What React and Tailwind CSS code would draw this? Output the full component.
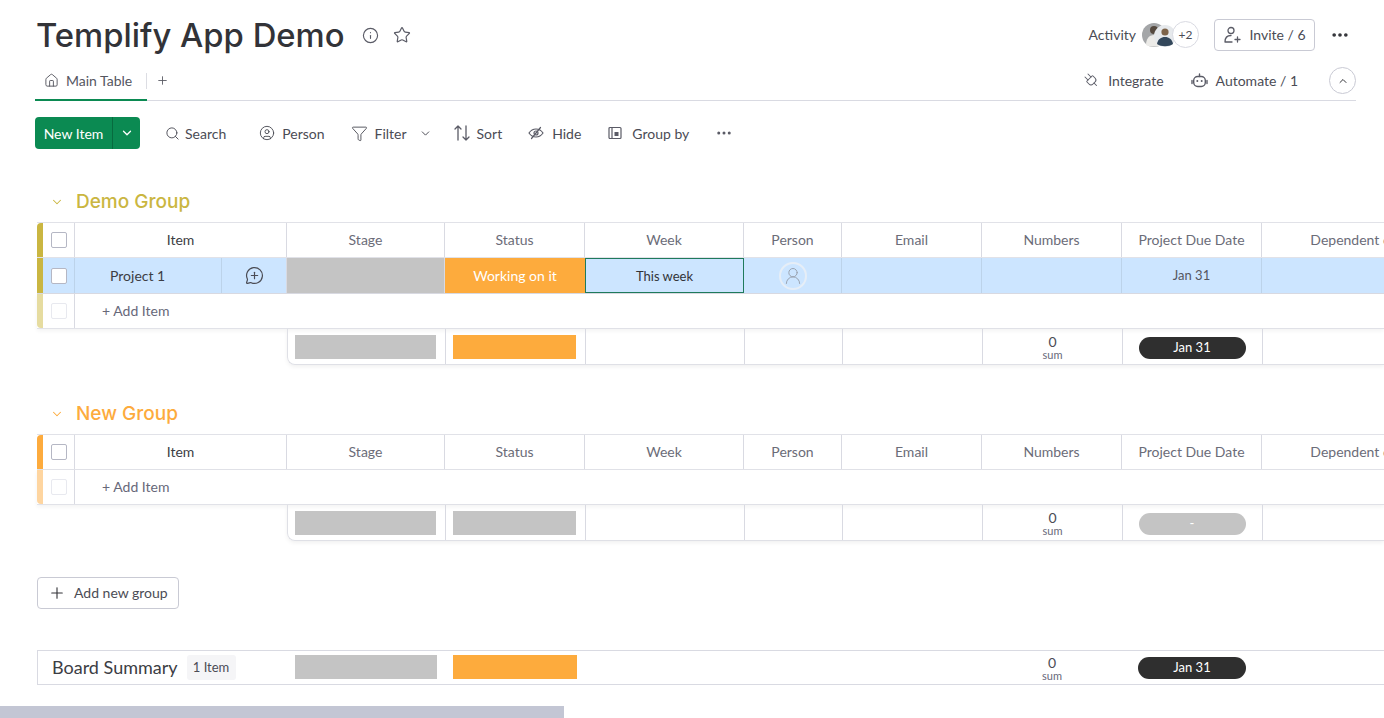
import React from "react";
import { House, Info, Star, Search, CircleUser, Funnel, ChevronDown, ChevronUp, Plus, Plug, MessageCirclePlus, Ellipsis, UserRound } from "lucide-react";

const GRID = "grid grid-cols-[32px_212px_158px_140px_159px_98px_140px_140px_140px_186px] w-[1425px] shrink-0";
const SUMMARY_GRID = "grid grid-cols-[158px_140px_159px_98px_140px_140px_140px_186px] w-[1161px] shrink-0";
const COLS = ["Stage", "Status", "Week", "Person", "Email", "Numbers", "Project Due Date", "Dependent on"];

function Tool({ icon, label, gap = "gap-[7px]" }) {
  return (
    <div className={`flex items-center ${gap} text-[14px] text-[#4b4c55] whitespace-nowrap`}>
      {icon}
      <span>{label}</span>
    </div>
  );
}

function Check({ faint }) {
  return (
    <div className={`w-4 h-4 rounded-[2px] border bg-white ${faint ? "border-[#e8e9ef]" : "border-[#b5b7c4]"}`} />
  );
}

function HeaderRow({ bar }) {
  const text = "flex items-center justify-center border-r border-[#d9dae2] text-[14px] pb-[2px] whitespace-nowrap";
  return (
    <div className="flex h-[36px] border-y border-[#e1e2e8]">
      <div className={`w-[6px] shrink-0 rounded-tl-[4px] ${bar}`} />
      <div className={`${GRID} h-full items-stretch`}>
        <div className="flex items-center justify-center border-r border-[#d9dae2]"><Check /></div>
        <div className={`${text} text-[#3c3d44]`}>Item</div>
        {COLS.map((c) => (
          <div key={c} className={`${text} text-[#6b6c78]`}>{c}</div>
        ))}
      </div>
    </div>
  );
}

function AddRow({ bar }) {
  return (
    <div className="flex h-[35px] border-b border-[#e1e2e8] shadow-[0_2px_4px_rgba(0,0,0,0.05)]">
      <div className={`w-[6px] shrink-0 rounded-bl-[4px] ${bar}`} />
      <div className="flex items-center w-[32px] shrink-0 justify-center border-r border-[#d9dae2]"><Check faint /></div>
      <div className="pl-[27px] pb-[2px] flex items-center text-[14px] text-[#676879]">+ Add Item</div>
    </div>
  );
}

function SumCell() {
  return (
    <div className="flex flex-col items-center justify-center leading-none text-[#4b4c55] pt-[2px]">
      <span className="text-[14px] leading-[14px]">0</span>
      <span className="text-[11px] leading-[11px] text-[#676879]">sum</span>
    </div>
  );
}

function SummaryRow({ status, pill, pillText }) {
  const cell = "border-r border-[#d9dae2] flex items-center";
  return (
    <div className="ml-[250px] h-[36px] border-l border-b border-[#dfe0e6] rounded-bl-[8px] shadow-[0_2px_4px_rgba(0,0,0,0.06)] overflow-hidden">
      <div className={`${SUMMARY_GRID} h-full`}>
        <div className={`${cell} pl-[7px] pr-[9px]`}><div className="h-6 w-full bg-[#c4c4c4]" /></div>
        <div className={`${cell} pl-[7px] pr-[9px]`}><div className={`h-6 w-full ${status}`} /></div>
        <div className={cell} />
        <div className={cell} />
        <div className={cell} />
        <div className={`${cell} justify-center`}><SumCell /></div>
        <div className={`${cell} justify-center pt-[2px] pr-[1px]`}>
          <div className={`w-[107px] h-[22px] rounded-full flex items-center justify-center text-[13px] text-white ${pill}`}>{pillText}</div>
        </div>
        <div />
      </div>
    </div>
  );
}

function GroupTitle({ color, iconColor, title, className }) {
  return (
    <div className={`flex items-center h-[24px] pl-[13px] pt-[2px] gap-[12px] ${className}`}>
      <ChevronDown size={14} strokeWidth={1.8} className={iconColor} />
      <span className={`font-['Inter',sans-serif] text-[19px] font-medium ${color}`}>{title}</span>
    </div>
  );
}

function Avatars() {
  return (
    <div className="flex items-center ml-[6px]">
      <svg width="32" height="26" viewBox="0 0 32 26" className="shrink-0">
        <circle cx="12" cy="13" r="12" fill="#a4a6a8" />
        <circle cx="12" cy="8" r="4" fill="#55493f" />
        <path d="M4 23c0-6 3-10 8-10s8 4 8 10c-4 2-12 2-16 0z" fill="#ecebe8" />
        <circle cx="23" cy="14" r="11" fill="#e6e9ec" />
        <circle cx="23" cy="10" r="3.6" fill="#7d6349" />
        <path d="M15 22c1-5 4-7 8-7s7 2 8 7c-4 3-12 3-16 0z" fill="#33475b" />
      </svg>
      <div className="w-[27px] h-[27px] ml-[-2px] rounded-full bg-white border border-[#d9dae2] flex items-center justify-center text-[12px] text-[#4b4c55] relative">+2</div>
    </div>
  );
}

function BotIcon() {
  return (
    <svg width="17" height="17" viewBox="0 0 17 17" fill="none" stroke="#5a5b66" strokeWidth="1.4" strokeLinecap="round">
      <rect x="2.700" y="4.500" width="11.600" height="10" rx="4" />
      <path d="M8.500 2v2.500" />
      <path d="M1 8.500v3 M16 8.500v3" />
      <circle cx="6.300" cy="9" r="1" fill="#5a5b66" stroke="none" />
      <circle cx="10.700" cy="9" r="1" fill="#5a5b66" stroke="none" />
    </svg>
  );
}

function SortIcon() {
  return (
    <svg width="16" height="18" viewBox="0 0 16 18" fill="none" stroke="#5a5b66" strokeWidth="1.3" strokeLinecap="round" strokeLinejoin="round">
      <path d="M4 16V2 M1 5l3-3 3 3" />
      <path d="M12 2v14 M9 13l3 3 3-3" />
    </svg>
  );
}

function HideIcon() {
  return (
    <svg width="16" height="16" viewBox="0 0 16 16" fill="none" stroke="#5a5b66" strokeWidth="1.2" strokeLinecap="round">
      <path d="M1 8c2-3 4.500-4 7-4s5 1 7 4c-2 3-4.500 4-7 4s-5-1-7-4z" />
      <circle cx="8" cy="8" r="2" />
      <path d="M3.500 13.500 12.500 2.500" />
    </svg>
  );
}

export default function App() {
  return (
    <div className="w-[1384px] h-[718px] overflow-hidden bg-white font-['Lato','Roboto',sans-serif] text-[#323338]">
      <div className="pl-[35px] pr-[28px]">
        <div className="flex items-center justify-between h-[40px] mt-[15px] pl-[1px] pr-[6px]">
          <div className="flex items-center">
            <h1 className="font-['Inter',sans-serif] font-medium text-[32.8px] leading-[40px] text-[#323338]">Templify App Demo</h1>
            <Info size={17} strokeWidth={1.6} className="ml-[17px] text-[#5a5b66]" />
            <Star size={18} strokeWidth={1.6} className="ml-[14px] text-[#5a5b66]" />
          </div>
          <div className="flex items-center pb-[1px]">
            <span className="text-[14px] text-[#4b4c55]">Activity</span>
            <Avatars />
            <div className="ml-[15px] h-[32px] w-[101px] rounded-[4px] border border-[#c9cad4] flex items-center justify-center gap-[8px] text-[14px] text-[#4b4c55]">
              <svg width="18" height="18" viewBox="0 0 18 18" fill="none" stroke="#5a5b66" strokeWidth="1.3" strokeLinecap="round">
                <circle cx="8" cy="4.500" r="3" />
                <path d="M2 16c0-4 2-6.500 6-6.500 M2 16h7 M12 13.500h5 M14.500 11v5" />
              </svg>
              <span>Invite / 6</span>
            </div>
            <Ellipsis size={20} strokeWidth={2.4} className="ml-[15px] text-[#323338]" />
          </div>
        </div>

        <div className="flex items-stretch justify-between h-[38px] mt-[8px] border-b border-[#d9dae2]">
          <div className="flex items-stretch">
            <div className="w-[112px] border-b-2 border-[#0b8a52] mb-[-1px] flex items-center pl-[9px] pb-[2px] gap-[7px] text-[14px] text-[#55565f]">
              <House size={15} strokeWidth={1.5} />
              <span>Main Table</span>
            </div>
            <div className="flex items-center ml-[-1px] pb-[2px]">
              <div className="w-px h-[16px] bg-[#dcdde3]" />
              <Plus size={13} strokeWidth={1.6} className="ml-[9px] text-[#55565f]" />
            </div>
          </div>
          <div className="flex items-center pb-[2px]">
            <Tool icon={<Plug size={17} strokeWidth={1.4} className="-rotate-45 text-[#5a5b66]" />} label="Integrate" gap="gap-[8px]" />
            <div className="ml-[27px]"><Tool icon={<BotIcon />} label="Automate / 1" gap="gap-[8px]" /></div>
            <div className="ml-[31px] w-[27px] h-[27px] rounded-full border border-[#c9cad4] flex items-center justify-center">
              <ChevronUp size={12} strokeWidth={2} className="text-[#323338]" />
            </div>
          </div>
        </div>

        <div className="flex items-center h-[32px] mt-[16px]">
          <div className="flex h-[32px] w-[105px] rounded-[4px] bg-[#0b8a52] text-white text-[14px]">
            <div className="w-[78px] flex items-center justify-center border-r border-[#076b3f]">New Item</div>
            <div className="flex-1 flex items-center justify-center"><ChevronDown size={14} strokeWidth={2.2} /></div>
          </div>
          <div className="ml-[25px]"><Tool icon={<Search size={15} strokeWidth={1.5} />} label="Search" gap="gap-[5px]" /></div>
          <div className="ml-[33px]"><Tool icon={<CircleUser size={16} strokeWidth={1.4} />} label="Person" gap="gap-[7px]" /></div>
          <div className="ml-[26px] flex items-center text-[#4b4c55]">
            <Tool icon={<Funnel size={17} strokeWidth={1.3} />} label="Filter" gap="gap-[7px]" />
            <ChevronDown size={13} strokeWidth={1.8} className="ml-[12px]" />
          </div>
          <div className="ml-[22px]"><Tool gap="gap-[7px]" label="Sort" icon={<SortIcon />} /></div>
          <div className="ml-[26px]"><Tool icon={<HideIcon />} label="Hide" gap="gap-[8px]" /></div>
          <div className="ml-[27px]">
            <Tool gap="gap-[10px]" label="Group by" icon={
              <svg width="14" height="14" viewBox="0 0 14 14" fill="none" stroke="#5a5b66" strokeWidth="1.2">
                <rect x="1" y="1.500" width="12" height="11" rx="1" />
                <path d="M4 1.500v11" />
                <rect x="6.500" y="6" width="4" height="4" fill="#5a5b66" stroke="none" />
              </svg>
            } />
          </div>
          <Ellipsis size={18} strokeWidth={2} className="ml-[26px] text-[#5a5b66]" />
        </div>
      </div>

      <div className="pl-[37px]">
        <GroupTitle className="mt-[40px]" color="text-[#cab641]" iconColor="text-[#cab641]" title="Demo Group" />
        <div className="mt-[9px]">
          <HeaderRow bar="bg-[#cab641]" />
          <div className="flex h-[36px] border-b border-[#d9dae2] bg-[#cce5ff]">
            <div className="w-[6px] shrink-0 bg-[#cab641]" />
            <div className={`${GRID} h-full`}>
              <div className="flex items-center justify-center border-r border-[#bcd3ea]"><Check /></div>
              <div className="flex items-stretch border-r border-[#d9dae2]">
                <div className="w-[147px] pl-[35px] flex items-center border-r border-[#bcd3ea] text-[14px] text-[#3c3d44]">Project 1</div>
                <div className="flex-1 flex items-center justify-center"><MessageCirclePlus size={19} strokeWidth={1.5} className="text-[#4b4c55]" /></div>
              </div>
              <div className="bg-[#c4c4c4] border-r border-[#d9dae2]" />
              <div className="bg-[#fdab3d] flex items-center justify-center text-[14px] text-white">Working on it</div>
              <div className="border border-[#1f7a5c] pt-[2px] flex items-center justify-center text-[13px] text-[#323338]">This week</div>
              <div className="flex items-center justify-center border-r border-[#bcd3ea]">
                <div className="w-[28px] h-[28px] rounded-full border-2 border-[#e6eef7] flex items-center justify-center">
                  <UserRound size={20} strokeWidth={1.2} className="text-[#9aa3b0]" />
                </div>
              </div>
              <div className="border-r border-[#bcd3ea]" />
              <div className="border-r border-[#bcd3ea]" />
              <div className="flex items-center justify-center border-r border-[#bcd3ea] text-[13px] text-[#55565f]">Jan 31</div>
              <div />
            </div>
          </div>
          <AddRow bar="bg-[#e6dca0]" />
          <SummaryRow status="bg-[#fdab3d]" pill="bg-[#2f2f2f]" pillText="Jan 31" />
        </div>

        <GroupTitle className="mt-[36px]" color="text-[#fdab3d]" iconColor="text-[#fdab3d]" title="New Group" />
        <div className="mt-[9px]">
          <HeaderRow bar="bg-[#fdab3d]" />
          <AddRow bar="bg-[#fed5a0]" />
          <SummaryRow status="bg-[#c4c4c4]" pill="bg-[#c4c4c4]" pillText="-" />
        </div>

        <div className="mt-[36px] w-[142px] h-[32px] rounded-[4px] border border-[#c9cad4] flex items-center pl-[10px] pb-[1px] gap-[8px] text-[14px] text-[#4b4c55]">
          <Plus size={18} strokeWidth={1.5} className="text-[#323338]" />
          <span>Add new group</span>
        </div>

        <div className="mt-[41px] h-[35px] border border-[#d9dae2] border-r-0 flex items-center">
          <div className="w-[249px] shrink-0 flex items-center pl-[14px] gap-[9px] whitespace-nowrap">
            <span className="text-[18px] leading-[22px] pb-[2px] text-[#3c3d44]">Board Summary</span>
            <span className="h-[25px] w-[49px] rounded-[3px] bg-[#f5f5f7] flex items-center justify-center text-[13px] text-[#4b4c55]">1 Item</span>
          </div>
          <div className={`${SUMMARY_GRID} h-full`}>
            <div className="px-2 flex items-center pb-[1px]"><div className="h-6 w-full bg-[#c4c4c4]" /></div>
            <div className="px-2 flex items-center pb-[1px]"><div className="h-6 w-full bg-[#fdab3d]" /></div>
            <div />
            <div />
            <div />
            <div className="flex items-center justify-center"><SumCell /></div>
            <div className="flex items-center justify-center">
              <div className="w-[108px] h-[22px] rounded-full bg-[#2f2f2f] flex items-center justify-center text-[13px] text-white">Jan 31</div>
            </div>
            <div />
          </div>
        </div>
      </div>

      <div className="mt-[21px] w-[564px] h-[12px] bg-[#c3c6d4]" />
    </div>
  );
}
